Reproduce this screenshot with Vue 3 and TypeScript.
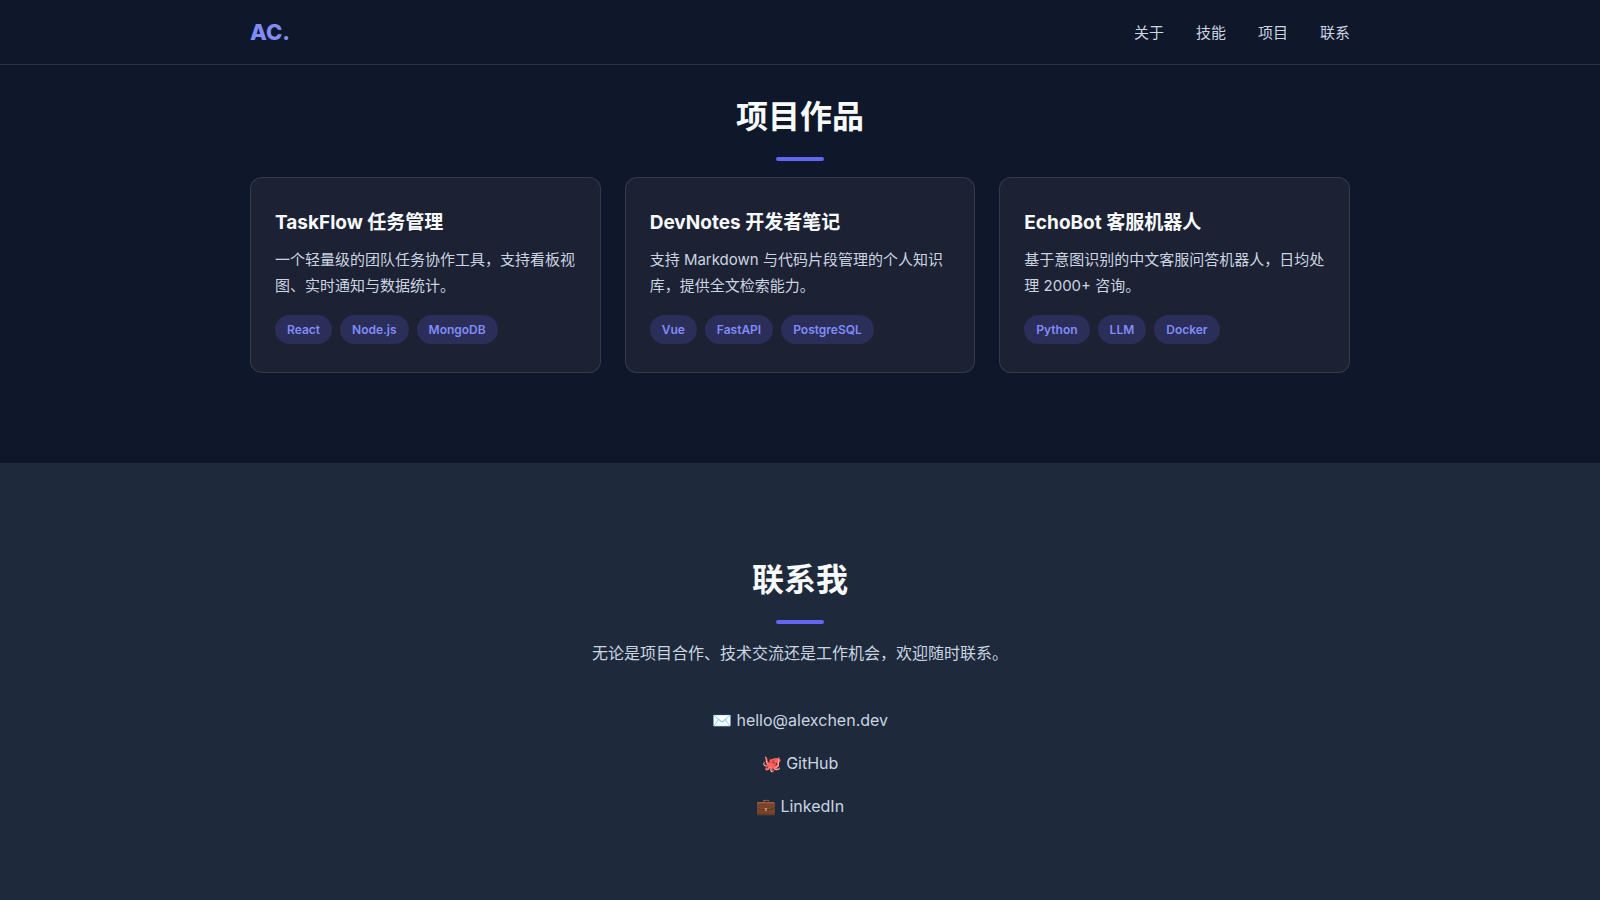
<script setup lang="ts">
interface NavItem {
  label: string
  href: string
}

interface Project {
  title: string
  summary: string
  tags: string[]
}

interface Contact {
  icon: string
  label: string
  href: string
}

const navItems: NavItem[] = [
  { label: '关于', href: '#about' },
  { label: '技能', href: '#skills' },
  { label: '项目', href: '#projects' },
  { label: '联系', href: '#contact' },
]

const projects: Project[] = [
  {
    title: 'TaskFlow 任务管理',
    summary: '一个轻量级的团队任务协作工具，支持看板视图、实时通知与数据统计。',
    tags: ['React', 'Node.js', 'MongoDB'],
  },
  {
    title: 'DevNotes 开发者笔记',
    summary: '支持 Markdown 与代码片段管理的个人知识库，提供全文检索能力。',
    tags: ['Vue', 'FastAPI', 'PostgreSQL'],
  },
  {
    title: 'EchoBot 客服机器人',
    summary: '基于意图识别的中文客服问答机器人，日均处理 2000+ 咨询。',
    tags: ['Python', 'LLM', 'Docker'],
  },
]

const contacts: Contact[] = [
  { icon: '✉️', label: 'hello@alexchen.dev', href: 'mailto:hello@alexchen.dev' },
  { icon: '🐙', label: 'GitHub', href: '#github' },
  { icon: '💼', label: 'LinkedIn', href: '#linkedin' },
]
</script>

<template>
  <div class="page">
    <header class="site-header">
      <div class="container header-inner">
        <a class="logo" href="#top">AC.</a>
        <nav class="nav" aria-label="主导航">
          <a v-for="item in navItems" :key="item.href" class="nav-link" :href="item.href">{{ item.label }}</a>
        </nav>
      </div>
    </header>

    <main class="main">
      <section id="projects" class="section projects">
        <div class="container">
          <h2 class="section-title">项目作品</h2>
          <div class="project-grid">
            <article v-for="project in projects" :key="project.title" class="card">
              <h3 class="card-title">{{ project.title }}</h3>
              <p class="card-summary">{{ project.summary }}</p>
              <ul class="tags">
                <li v-for="tag in project.tags" :key="tag" class="tag">{{ tag }}</li>
              </ul>
            </article>
          </div>
        </div>
      </section>

      <section id="contact" class="section contact">
        <div class="container">
          <h2 class="section-title">联系我</h2>
          <p class="contact-intro">无论是项目合作、技术交流还是工作机会，欢迎随时联系。</p>
          <ul class="contact-list">
            <li v-for="contact in contacts" :key="contact.label">
              <a class="contact-link" :href="contact.href">{{ contact.icon }} {{ contact.label }}</a>
            </li>
          </ul>
        </div>
      </section>
    </main>
  </div>
</template>

<style>
body {
  margin: 0;
  background: #0f172a;
}
</style>

<style scoped>
.page {
  display: flex;
  flex-direction: column;
  min-height: 100vh;
  background: #0f172a;
  color: #cbd5e1;
  font-family: Inter, 'Noto Sans CJK SC', sans-serif;
  font-size: 16px;
  line-height: 27px;
}

.container {
  box-sizing: border-box;
  width: 100%;
  max-width: 1148px;
  margin: 0 auto;
  padding: 0 24px;
}

.site-header {
  border-bottom: 1px solid rgba(148, 163, 184, 0.2);
}

.header-inner {
  display: flex;
  align-items: center;
  justify-content: space-between;
  height: 64px;
}

.logo {
  color: #818cf8;
  font-size: 22px;
  font-weight: 800;
  text-decoration: none;
}

.nav {
  display: flex;
  gap: 32px;
}

.nav-link {
  color: #cbd5e1;
  font-size: 15px;
  text-decoration: none;
}

.main {
  display: flex;
  flex: 1;
  flex-direction: column;
}

.projects {
  padding: 25px 0 90px;
}

.contact {
  flex: 1;
  padding: 90px 0 80px;
  background: #1e293b;
  text-align: center;
}

.section-title {
  margin: 0 0 16px;
  color: #f8fafc;
  font-size: 32px;
  font-weight: 700;
  line-height: 54px;
  text-align: center;
}

.section-title::after {
  display: block;
  width: 48px;
  height: 4px;
  margin: 13px auto 0;
  border-radius: 2px;
  background: #6366f1;
  content: '';
}

.project-grid {
  display: grid;
  grid-template-columns: repeat(auto-fit, minmax(300px, 1fr));
  gap: 24px;
}

.card {
  padding: 28px 24px;
  border: 1px solid rgba(148, 163, 184, 0.2);
  border-radius: 12px;
  background: #1c2133;
}

.card-title {
  margin: 0 0 8px;
  color: #f8fafc;
  font-size: 19px;
  font-weight: 700;
  line-height: 33px;
}

.card-summary {
  margin: 0 0 16px;
  font-size: 15px;
  line-height: 26px;
}

.tags {
  display: flex;
  flex-wrap: wrap;
  gap: 8px;
  margin: 0;
  padding: 0;
  list-style: none;
}

.tag {
  padding: 4px 12px;
  border-radius: 999px;
  background: rgba(99, 102, 241, 0.2);
  color: #818cf8;
  font-size: 12px;
  font-weight: 600;
  line-height: 21px;
}

.contact-intro {
  margin: 0 0 40px;
}

.contact-list {
  display: flex;
  flex-direction: column;
  align-items: center;
  gap: 16px;
  margin: 0;
  padding: 0;
  list-style: none;
}

.contact-link {
  color: #cbd5e1;
  text-decoration: none;
}
</style>
